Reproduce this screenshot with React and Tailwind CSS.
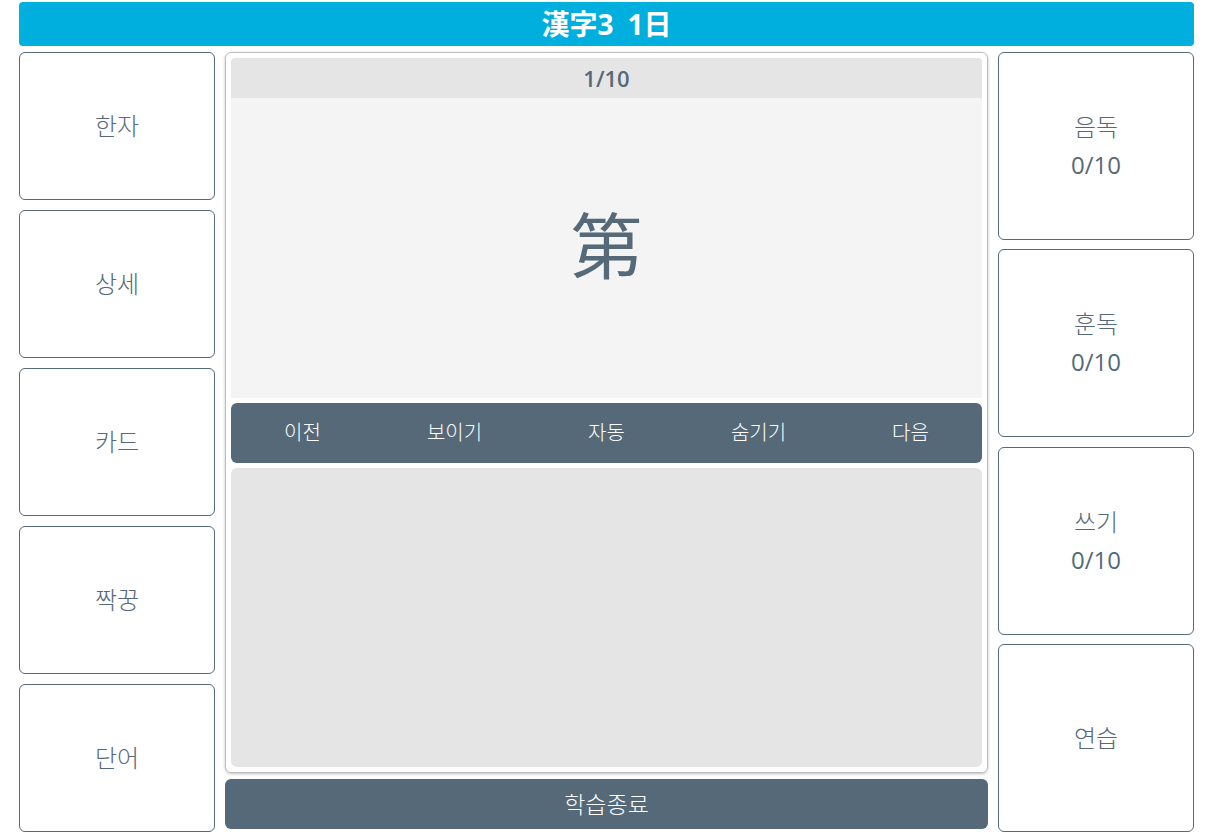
const font = { fontFamily: '"Open Sans", "Noto Sans CJK KR", sans-serif' };

const leftMenu = ["한자", "상세", "카드", "짝꿍", "단어"];
const rightMenu = [
  { label: "음독", count: "0/10" },
  { label: "훈독", count: "0/10" },
  { label: "쓰기", count: "0/10" },
  { label: "연습" },
];
const controls = ["이전", "보이기", "자동", "숨기기", "다음"];

export default function App() {
  return (
    <div
      className="w-[1211px] h-[832px] bg-white pl-[19px] pr-[17px] pt-[2px] flex flex-col text-[#556978]"
      style={font}
    >
      <div className="h-[44px] shrink-0 rounded-[4px] bg-[#00afdd] flex items-center justify-center gap-[14px] text-white text-[28px] font-bold">
        <span>漢字3</span>
        <span>1日</span>
      </div>

      <div className="flex gap-[10px] mt-[6px] h-[780px]">
        {/* left menu */}
        <div className="w-[196px] shrink-0 flex flex-col gap-[9.5px]">
          {leftMenu.map((m) => (
            <button
              key={m}
              className="flex-1 rounded-[6px] border border-[#556978] bg-white flex items-center justify-center text-[24px] font-light"
            >
              {m}
            </button>
          ))}
        </div>

        {/* center */}
        <div className="flex-1 min-w-0 flex flex-col">
          <div className="h-[721px] rounded-[6px] border border-[#bdbdbd] shadow-[0_1px_3px_rgba(0,0,0,0.25)] p-[5px] flex flex-col gap-[5px]">
            <div className="rounded-t-[4px] overflow-hidden flex flex-col">
              <div className="h-[40px] bg-[#e5e5e5] flex items-center justify-center text-[22px] font-semibold">
                1/10
              </div>
              <div className="h-[300px] bg-[#f4f4f4] flex items-center justify-center text-[72px] pb-[6px]">
                第
              </div>
            </div>
            <div className="h-[60px] rounded-[6px] bg-[#556978] flex items-center justify-center text-white text-[20px] font-light">
              {controls.map((c) => (
                <button key={c} className="w-[152px] shrink-0 text-center">
                  {c}
                </button>
              ))}
            </div>
            <div className="flex-1 rounded-[6px] bg-[#e5e5e5]"></div>
          </div>
          <button className="mt-[6px] h-[50px] rounded-[6px] bg-[#556978] text-white text-[23px] font-light flex items-center justify-center">
            학습종료
          </button>
        </div>

        {/* right menu */}
        <div className="w-[196px] shrink-0 flex flex-col gap-[9.5px]">
          {rightMenu.map((m) => (
            <button
              key={m.label}
              className="flex-1 rounded-[6px] border border-[#556978] bg-white flex flex-col items-center justify-center text-[24px] leading-[38px]"
            >
              <span className="font-light">{m.label}</span>
              {m.count && <span>{m.count}</span>}
            </button>
          ))}
        </div>
      </div>
    </div>
  );
}
